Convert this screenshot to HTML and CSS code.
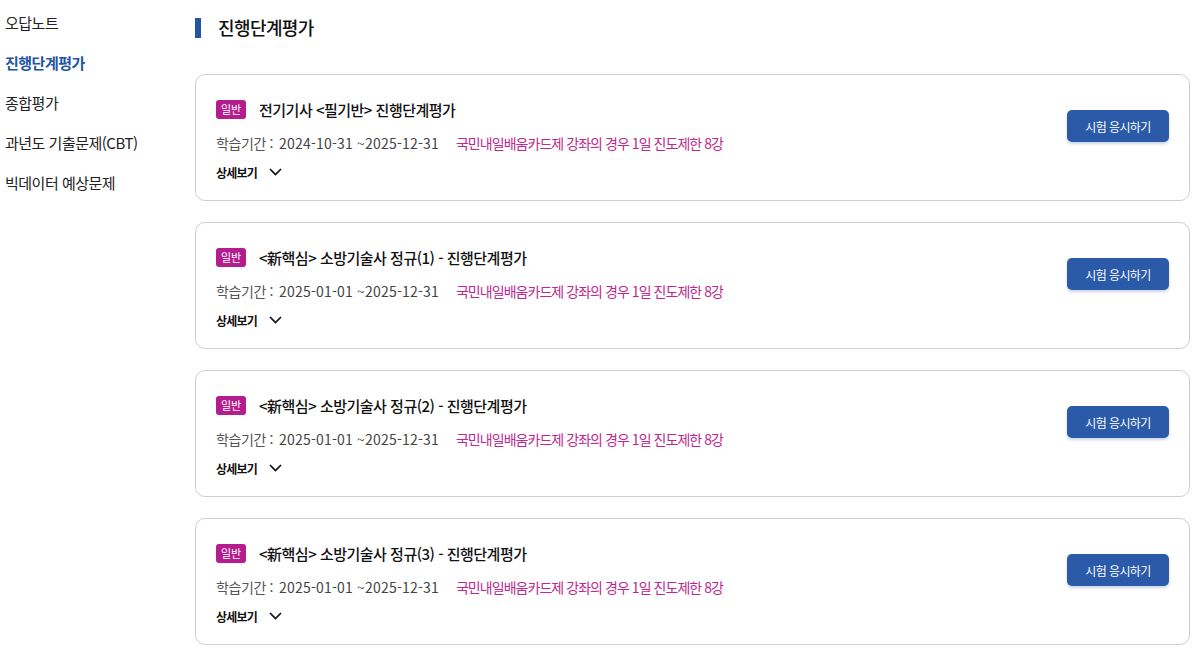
FILE: index.html
```html
<!DOCTYPE html>
<html lang="ko">
<head>
<meta charset="utf-8">
<link rel="stylesheet" href="styles.css">
</head>
<body>
<div class="page">
  <nav class="side">
    <a class="side-item">오답노트</a>
    <a class="side-item active">진행단계평가</a>
    <a class="side-item">종합평가</a>
    <a class="side-item">과년도 기출문제(CBT)</a>
    <a class="side-item">빅데이터 예상문제</a>
  </nav>
  <main class="main">
    <h2 class="head"><span class="head-bar"></span>진행단계평가</h2>
    <div class="list">
      <div class="card">
        <div class="info">
          <div class="title-row"><span class="badge">일반</span><span class="title">전기기사 &lt;필기반&gt; 진행단계평가</span></div>
          <div class="meta"><span class="label">학습기간 :</span><span class="dates">2024-10-31 ~2025-12-31</span><span class="note">국민내일배움카드제 강좌의 경우 1일 진도제한 8강</span></div>
          <div class="detail">상세보기 <svg class="chev" width="13" height="8" viewBox="0 0 13 8"><path d="M1 1 L6.5 6.5 L12 1" fill="none" stroke="#111" stroke-width="1.7"/></svg></div>
        </div>
        <button class="btn">시험 응시하기</button>
      </div>
      <div class="card">
        <div class="info">
          <div class="title-row"><span class="badge">일반</span><span class="title">&lt;新핵심&gt; 소방기술사 정규(1) - 진행단계평가</span></div>
          <div class="meta"><span class="label">학습기간 :</span><span class="dates">2025-01-01 ~2025-12-31</span><span class="note">국민내일배움카드제 강좌의 경우 1일 진도제한 8강</span></div>
          <div class="detail">상세보기 <svg class="chev" width="13" height="8" viewBox="0 0 13 8"><path d="M1 1 L6.5 6.5 L12 1" fill="none" stroke="#111" stroke-width="1.7"/></svg></div>
        </div>
        <button class="btn">시험 응시하기</button>
      </div>
      <div class="card">
        <div class="info">
          <div class="title-row"><span class="badge">일반</span><span class="title">&lt;新핵심&gt; 소방기술사 정규(2) - 진행단계평가</span></div>
          <div class="meta"><span class="label">학습기간 :</span><span class="dates">2025-01-01 ~2025-12-31</span><span class="note">국민내일배움카드제 강좌의 경우 1일 진도제한 8강</span></div>
          <div class="detail">상세보기 <svg class="chev" width="13" height="8" viewBox="0 0 13 8"><path d="M1 1 L6.5 6.5 L12 1" fill="none" stroke="#111" stroke-width="1.7"/></svg></div>
        </div>
        <button class="btn">시험 응시하기</button>
      </div>
      <div class="card">
        <div class="info">
          <div class="title-row"><span class="badge">일반</span><span class="title">&lt;新핵심&gt; 소방기술사 정규(3) - 진행단계평가</span></div>
          <div class="meta"><span class="label">학습기간 :</span><span class="dates">2025-01-01 ~2025-12-31</span><span class="note">국민내일배움카드제 강좌의 경우 1일 진도제한 8강</span></div>
          <div class="detail">상세보기 <svg class="chev" width="13" height="8" viewBox="0 0 13 8"><path d="M1 1 L6.5 6.5 L12 1" fill="none" stroke="#111" stroke-width="1.7"/></svg></div>
        </div>
        <button class="btn">시험 응시하기</button>
      </div>
    </div>
  </main>
</div>
</body>
</html>
```
FILE: styles.css
```css
* { box-sizing: border-box; }
html, body { margin: 0; padding: 0; background: #fff; }
body {
  font-family: "Noto Sans CJK KR", "Noto Sans", sans-serif;
  color: #111;
}
.page { display: flex; align-items: flex-start; }
.side {
  width: 195px;
  flex: none;
  padding: 13px 0 0 5px;
  display: flex;
  flex-direction: column;
  gap: 20px;
}
.side-item {
  font-size: 15px;
  line-height: 20px;
  color: #222;
  letter-spacing: -0.5px;
}
.side-item.active { color: #2455a4; font-weight: 700; }
.main { width: 995px; flex: none; }
.head {
  margin: 0;
  padding-top: 17px;
  height: 74px;
  display: flex;
  align-items: flex-start;
  font-size: 18px;
  font-weight: 500;
  line-height: 21px;
  letter-spacing: -0.6px;
  color: #111;
}
.head-bar {
  width: 6px;
  height: 20px;
  background: #2455a4;
  margin-right: 17px;
  margin-top: 1px;
}
.list { display: flex; flex-direction: column; gap: 21px; }
.card {
  border: 1px solid #cfcfcf;
  border-radius: 10px;
  padding: 23px 20px 18px 20px;
  display: flex;
  justify-content: space-between;
  align-items: flex-start;
  height: 127px;
}
.title-row { display: flex; align-items: center; height: 22px; }
.badge {
  width: 30px;
  height: 19px;
  border-radius: 3px;
  background: #b51c8e;
  color: #fff;
  font-size: 11px;
  line-height: 19px;
  text-align: center;
  margin-right: 13px;
}
.title {
  font-size: 15px;
  font-weight: 500;
  letter-spacing: -0.5px;
  color: #111;
}
.meta {
  margin-top: 12px;
  height: 22px;
  display: flex;
  align-items: center;
  font-size: 14px;
}
.label { color: #555; width: 63px; letter-spacing: -0.4px; }
.dates { color: #444; margin-right: 17px; letter-spacing: 0.2px; }
.note { color: #c0288f; letter-spacing: -0.95px; }
.detail {
  margin-top: 8px;
  height: 20px;
  display: flex;
  align-items: center;
  font-size: 12px;
  font-weight: 700;
  letter-spacing: -0.8px;
  color: #111;
}
.chev { margin-left: 12px; }
.btn {
  margin-top: 12px;
  width: 102px;
  height: 32px;
  border: none;
  border-radius: 5px;
  background: #2a5aa8;
  color: #fff;
  font-family: inherit;
  font-size: 12px;
  letter-spacing: -0.6px;
  box-shadow: 0 2px 3px rgba(42, 90, 168, 0.25);
  cursor: pointer;
}
```
